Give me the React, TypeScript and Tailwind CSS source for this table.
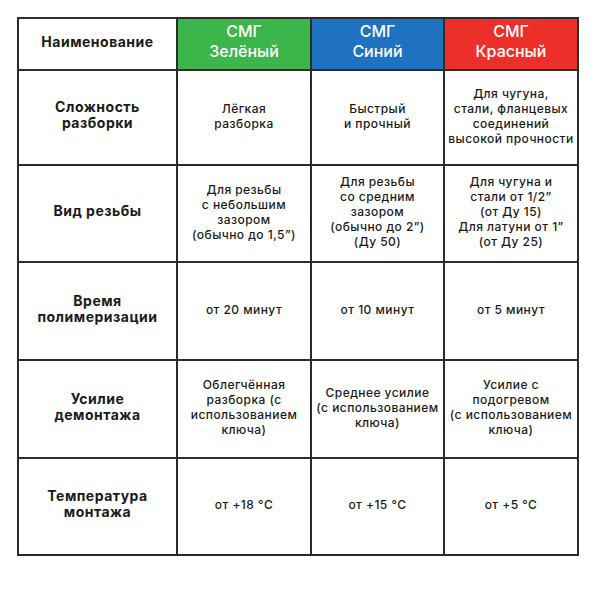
import React from "react";

const rows: { label: string[]; cells: string[][] }[] = [
  {
    label: ["Сложность", "разборки"],
    cells: [
      ["Лёгкая", "разборка"],
      ["Быстрый", "и прочный"],
      ["Для чугуна,", "стали, фланцевых", "соединений", "высокой прочности"],
    ],
  },
  {
    label: ["Вид резьбы"],
    cells: [
      ["Для резьбы", "с небольшим", "зазором", "(обычно до 1,5”)"],
      ["Для резьбы", "со средним", "зазором", "(обычно до 2”)", "(Ду 50)"],
      ["Для чугуна и", "стали от 1/2”", "(от Ду 15)", "Для латуни от 1”", "(от Ду 25)"],
    ],
  },
  {
    label: ["Время", "полимеризации"],
    cells: [["от 20 минут"], ["от 10 минут"], ["от 5 минут"]],
  },
  {
    label: ["Усилие", "демонтажа"],
    cells: [
      ["Облегчённая", "разборка (с", "использованием", "ключа)"],
      ["Среднее усилие", "(с использованием", "ключа)"],
      ["Усилие с", "подогревом", "(с использованием", "ключа)"],
    ],
  },
  {
    label: ["Температура", "монтажа"],
    cells: [["от +18 °C"], ["от +15 °C"], ["от +5 °C"]],
  },
];

const heights = ["h-[93px]", "h-[95px]", "h-[96px]", "h-[96px]", "h-[95px]"];

export default function App() {
  return (
    <div
      className="min-h-[599px] w-[597px] bg-white pl-[17px] pt-[17px]"
      style={{ fontFamily: 'Inter, "Open Sans", sans-serif' }}
    >
      <div className="grid w-fit grid-cols-[157px_132px_131px_132px] gap-[2px] bg-[#2b2b2b] p-[2px]">
        <div className="flex h-[50px] items-center justify-center bg-white pb-[4px] text-[14px] font-bold leading-[18px] tracking-[0.5px] text-[#1a1a1a]">
          Наименование
        </div>
        <div className="flex h-[50px] flex-col items-center justify-center bg-[#3cb54a] pb-[7px] text-[16px] font-medium leading-[20px] text-white">
          <span>СМГ</span>
          <span>Зелёный</span>
        </div>
        <div className="flex h-[50px] flex-col items-center justify-center bg-[#1f72bf] pb-[7px] text-[16px] font-medium leading-[20px] text-white">
          <span>СМГ</span>
          <span>Синий</span>
        </div>
        <div className="flex h-[50px] flex-col items-center justify-center bg-[#ec3029] pb-[7px] text-[16px] font-medium leading-[20px] text-white">
          <span>СМГ</span>
          <span>Красный</span>
        </div>
        {rows.map((r, i) => (
          <React.Fragment key={i}>
            <div
              className={`flex ${heights[i]} flex-col items-center justify-center bg-white pb-[5px] text-center text-[14px] font-bold leading-[16px] tracking-[0.5px] text-[#1a1a1a]`}
            >
              {r.label.map((l, j) => (
                <span key={j}>{l}</span>
              ))}
            </div>
            {r.cells.map((c, k) => (
              <div
                key={k}
                className={`flex ${heights[i]} flex-col items-center justify-center whitespace-nowrap bg-white pb-[4px] text-center text-[12px] font-medium leading-[15px] tracking-[0.45px] text-[#1a1a1a]`}
              >
                {c.map((l, j) => (
                  <span key={j}>{l}</span>
                ))}
              </div>
            ))}
          </React.Fragment>
        ))}
      </div>
    </div>
  );
}
